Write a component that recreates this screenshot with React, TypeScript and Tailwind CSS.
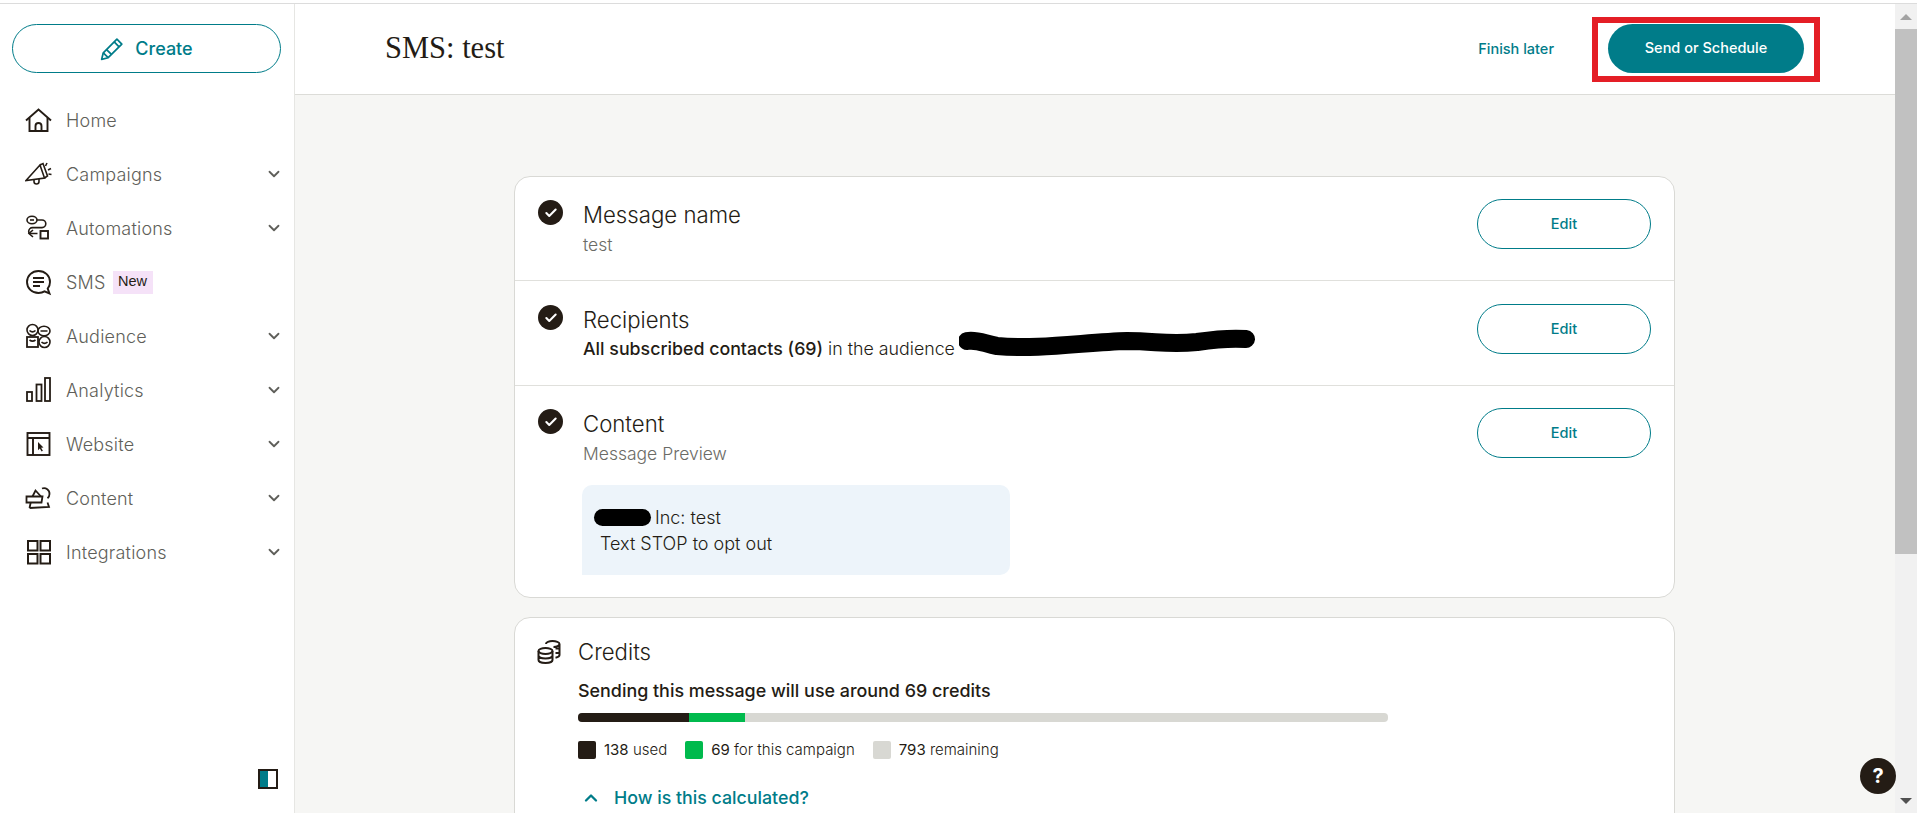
import React from "react";
import { ChevronDown, ChevronUp, Check } from "lucide-react";

const stroke = { fill: "none", stroke: "#241c15", strokeWidth: 1.6 };

const icons: Record<string, React.ReactNode> = {
  Home: (
    <g {...stroke}>
      <path d="M1 13.5 13.5 2.5 26 13.5" strokeWidth="1.9" />
      <path d="M4.5 11V24h18V11" strokeWidth="1.9" />
      <path d="M10.5 24v-5a3 3 0 0 1 6 0v5" strokeWidth="1.9" />
    </g>
  ),
  Campaigns: (
    <g {...stroke}>
      <path d="M1 19.5 15 4l4.5 13L1 19.5Z" />
      <path d="M15 4l3-1.5 4.5 12.5-3 2" />
      <path d="M9 18.5v2a2.5 2.5 0 0 0 5 0v-2.5" />
      <path d="M20.5 5l1.5-3M23 9l3-1.5M23.5 13l3 .5" />
    </g>
  ),
  Automations: (
    <g {...stroke}>
      <ellipse cx="7" cy="5" rx="5" ry="3.8" />
      <path d="M5 5h4" />
      <path d="M12 5h5a3.8 3.8 0 0 1 0 7.6H7.5A3.8 3.8 0 0 0 3.7 16.4c0 1 .3 1.6.8 2.1h8" />
      <path d="M8 15l-4 3.5L8 22" />
      <rect x="15.5" y="16" width="7.5" height="7.5" strokeWidth="1.9" />
    </g>
  ),
  SMS: (
    <g {...stroke}>
      <path d="M13.5 2C7 2 2 6.8 2 13s5 11 11.5 11c2.3 0 4.3-.5 6-1.6l5 2.1-1.8-4.8C24.3 17.8 25 15.5 25 13 25 6.8 20 2 13.5 2Z" strokeWidth="1.9" />
      <path d="M8 9h11M8 13h11M8 17h7" strokeWidth="1.9" />
    </g>
  ),
  Audience: (
    <g {...stroke}>
      <circle cx="7.5" cy="7" r="5.5" />
      <ellipse cx="19" cy="8" rx="6" ry="4.8" />
      <rect x="2" y="14" width="11" height="10" strokeWidth="1.8" />
      <circle cx="19.5" cy="19" r="5.5" />
      <path d="M4.5 7.5c2 1.8 4 1.8 6 0M15.5 8h7M4.5 17c2 1.5 4 1.5 6 0M16.5 19c2 1.8 4 1.8 6 0" />
    </g>
  ),
  Analytics: (
    <g {...stroke} strokeWidth="1.8">
      <rect x="2" y="15" width="5" height="9" />
      <rect x="11.5" y="7.5" width="5" height="16.5" />
      <rect x="20" y="1" width="5" height="23" />
    </g>
  ),
  Website: (
    <g {...stroke} strokeWidth="1.9">
      <rect x="2.5" y="2" width="22" height="22" />
      <path d="M2.5 7h22M8 7v17" />
      <path d="M13 11l5.5 5.5-2.4.3 1.8 3-1.3.7-1.8-3-1.8 1.7Z" fill="#241c15" stroke="none" />
    </g>
  ),
  Content: (
    <g {...stroke} strokeWidth="1.8">
      <path d="M1.5 11.5h16l-1 6H1.5v-6Z" />
      <path d="M7.5 11.5l3-6 5.5 6" />
      <path d="M4.5 23l1.2-5.5M4.5 23l19.5-1-1.5-4.5" />
      <path d="M17 3.5a5.5 5.5 0 0 1 7.5 5.5c0 1.8-.8 3.3-2 4.3" />
    </g>
  ),
  Integrations: (
    <g {...stroke} strokeWidth="2">
      <rect x="3" y="2" width="9.5" height="9.5" />
      <rect x="15.5" y="2" width="9.5" height="9.5" />
      <rect x="3" y="15" width="9.5" height="9.5" />
      <rect x="15.5" y="15" width="9.5" height="9.5" />
    </g>
  ),
};

const nav = [
  { label: "Home" },
  { label: "Campaigns", chevron: true },
  { label: "Automations", chevron: true },
  { label: "SMS", badge: true },
  { label: "Audience", chevron: true },
  { label: "Analytics", chevron: true },
  { label: "Website", chevron: true },
  { label: "Content", chevron: true },
  { label: "Integrations", chevron: true },
];

function NavRow({ label, chevron, badge }: { label: string; chevron?: boolean; badge?: boolean }) {
  return (
    <div className="flex h-[54px] items-center pl-[25px] pr-[11px]">
      <svg width="27" height="27" viewBox="0 0 27 27" className="shrink-0">
        {icons[label]}
      </svg>
      <span className="ml-[14px] text-[18px] font-light tracking-[0.2px] text-[#5f5f5a]">{label}</span>
      {badge && (
        <span
          className="ml-[7px] flex h-[23px] w-[40px] items-center justify-center bg-[#f5e2f8] text-[14.5px] text-[#241c15]"
          style={{ fontFamily: "'Liberation Sans', sans-serif" }}
        >
          New
        </span>
      )}
      {chevron && <ChevronDown className="ml-auto text-[#5f5f5a]" size={18} strokeWidth={2.4} />}
    </div>
  );
}

function Section({
  title,
  pad,
  last,
  children,
}: {
  title: string;
  pad: string;
  last?: boolean;
  children: React.ReactNode;
}) {
  return (
    <section className={`flex pl-[23px] pr-[23px] ${pad} ${last ? "h-[211px]" : "border-b border-[#e0e0dc]"}`}>
      <span className="mt-[1px] flex h-[25px] w-[25px] shrink-0 items-center justify-center rounded-full bg-[#241c15]">
        <Check size={14} strokeWidth={3.5} className="text-white" />
      </span>
      <div className="ml-[20px] min-w-0 flex-1">
        <h2 className="mt-[1px] text-[22.2px] leading-[30px] font-light text-[#241c15]">{title}</h2>
        {children}
      </div>
      <button className="h-[50px] w-[174px] shrink-0 rounded-full border border-[#007c89] bg-white text-[14.5px] font-medium text-[#007c89]">
        Edit
      </button>
    </section>
  );
}

function Legend({ color, num, text }: { color: string; num: string; text: string }) {
  return (
    <div className="flex items-center">
      <span className={`h-[18px] w-[18px] rounded-[2px] ${color}`} />
      <span className="ml-[8px] text-[15px] leading-[18px] font-light text-[#241c15]">
        <span className="font-normal">{num}</span> {text}
      </span>
    </div>
  );
}

export default function App() {
  return (
    <div
      className="relative flex h-[813px] w-[1917px] flex-col overflow-hidden bg-white"
      style={{ fontFamily: "Inter, 'Liberation Sans', sans-serif" }}
    >
      <div className="h-[4px] shrink-0 border-b border-[#dcdcdc] bg-white" />
      <div className="flex min-h-0 flex-1">
        <aside className="flex w-[295px] shrink-0 flex-col border-r border-[#e6e6e3] bg-white">
          <div className="pt-[20px] pr-[13px] pb-[20px] pl-[12px]">
            <button className="flex h-[49px] w-full items-center justify-center gap-[11px] rounded-full border border-[#007c89] text-[18px] font-medium text-[#007c89]">
              <svg width="24" height="24" viewBox="0 0 22 22" fill="none" stroke="#007c89" strokeWidth="1.6">
                <path d="M1.5 20.5l1.5-6L15.5 2l4.5 4.5L7.5 19l-6 1.5Z" strokeLinejoin="round" />
                <path d="M3 14.5l4.5 4.5M6 11.5l4.5 4.5M13 4.5l4.5 4.5" />
              </svg>
              Create
            </button>
          </div>
          <nav className="flex flex-col">
            {nav.map((n) => (
              <NavRow key={n.label} {...n} />
            ))}
          </nav>
          <div className="mt-auto flex justify-end pr-[16px] pb-[24px]">
            <div className="flex h-[20px] w-[20px] border-2 border-[#241c15]">
              <div className="w-1/2 bg-[#007c89]" />
              <div className="w-1/2 bg-white" />
            </div>
          </div>
        </aside>

        <main className="flex min-w-0 flex-1 flex-col overflow-hidden bg-[#f6f6f4]">
          <header className="flex h-[91px] shrink-0 items-center border-b border-[#dcdcd8] bg-white pr-[75px] pl-[90px]">
            <h1 className="text-[30.5px] text-[#241c15]" style={{ fontFamily: "'Liberation Serif', serif" }}>
              SMS: test
            </h1>
            <a className="ml-auto text-[14.5px] font-medium text-[#007c89]">Finish later</a>
            <div className="ml-[38px] border-[6px] border-[#e41e26] px-[10px] pt-[1px] pb-[3px]">
              <button className="h-[49px] w-[196px] rounded-full bg-[#007c89] text-[14.5px] font-medium text-white">
                Send or Schedule
              </button>
            </div>
          </header>

          <div className="ml-[219px] w-[1161px] pt-[81px]">
            <div className="rounded-[16px] border border-[#d9d9d5] bg-white">
              <Section title="Message name" pad="pt-[22px] h-[104px]">
                <p className="mt-[3px] text-[17.5px] leading-[24px] font-light text-[#6b6b66]">test</p>
              </Section>
              <Section title="Recipients" pad="pt-[23px] h-[105px]">
                <div className="relative mt-[2px] whitespace-nowrap text-[17.8px] leading-[24px] font-light text-[#241c15]">
                  <span className="font-medium">All subscribed contacts (69)</span> in the audience
                  <svg className="absolute top-[-10px] left-[376px]" width="305" height="40" viewBox="0 0 305 40">
                    <path
                      d="M8 14c10-2 18 3 30 5 40 4 90-4 130-5 30 0 40 4 70 1 20-3 36-4 49-3"
                      fill="none"
                      stroke="#000"
                      strokeWidth="18"
                      strokeLinecap="round"
                    />
                  </svg>
                </div>
              </Section>
              <Section title="Content" pad="pt-[22px]" last>
                <p className="mt-[3px] text-[17.5px] leading-[24px] font-light text-[#6b6b66]">Message Preview</p>
                <div className="mt-[19px] ml-[-1px] h-[90px] w-[428px] rounded-[10px] rounded-bl-none bg-[#edf4fa] pt-[19px] text-[18px] font-light text-[#241c15]">
                  <div className="flex h-[26px] items-center pl-[12px]">
                    <span className="h-[17px] w-[57px] rounded-full bg-black" />
                    <span className="ml-[4px]">Inc: test</span>
                  </div>
                  <div className="flex h-[27px] items-center pl-[18px]">Text STOP to opt out</div>
                </div>
              </Section>
            </div>

            <div className="mt-[19px] rounded-[16px] border border-[#d9d9d5] bg-white pt-[19px] pb-[60px] pl-[22px]">
              <div className="flex items-center">
                <svg width="24" height="24" viewBox="0 0 24 24" fill="none" stroke="#241c15" strokeWidth="2">
                  <ellipse cx="8.5" cy="11" rx="7" ry="3" />
                  <path d="M1.5 11v9c0 1.7 3.1 3 7 3s7-1.3 7-3v-9M1.5 15.5c0 1.7 3.1 3 7 3s7-1.3 7-3" />
                  <path d="M9 4c0-1.7 3-3 6.5-3s7 1.3 7 3-3 3-6 3M22.5 4v11c0 1.2-1.5 2.2-4 2.7M18.5 8.5h4M18.5 13h4" />
                </svg>
                <h2 className="ml-[17px] text-[22.2px] leading-[30px] font-light text-[#241c15]">Credits</h2>
              </div>
              <div className="pl-[41px]">
                <p className="mt-[12px] text-[17.9px] leading-[24px] font-medium text-[#241c15]">
                  Sending this message will use around 69 credits
                </p>
                <div className="mt-[10px] flex h-[9px] w-[810px] overflow-hidden rounded-[4px] bg-[#d8d8d3]">
                  <div className="w-[111px] bg-[#241c15]" />
                  <div className="w-[56px] bg-[#00ba4d]" />
                </div>
                <div className="mt-[19px] flex gap-[18px]">
                  <Legend color="bg-[#241c15]" num="138" text="used" />
                  <Legend color="bg-[#00ba4d]" num="69" text="for this campaign" />
                  <Legend color="bg-[#d8d8d3]" num="793" text="remaining" />
                </div>
                <div className="mt-[27px] flex h-[24px] items-center text-[#007c89]">
                  <ChevronUp size={20} strokeWidth={2.8} className="ml-[3px]" />
                  <span className="ml-[13px] text-[17.8px] font-medium">How is this calculated?</span>
                </div>
              </div>
            </div>
          </div>
        </main>

        <div className="flex w-[22px] shrink-0 flex-col items-center bg-[#f1f1f1]">
          <div className="flex h-[25px] w-full items-center justify-center">
            <span className="h-0 w-0 border-x-[6px] border-b-[6px] border-x-transparent border-b-[#a3a3a3]" />
          </div>
          <div className="h-[525px] w-full bg-[#c1c1c1]" />
          <div className="mt-auto flex h-[25px] w-full items-center justify-center">
            <span className="h-0 w-0 border-x-[6px] border-t-[6px] border-x-transparent border-t-[#505050]" />
          </div>
        </div>
      </div>

      <button className="absolute top-[758px] left-[1860px] flex h-[36px] w-[36px] items-center justify-center rounded-full bg-[#241c15] text-[20px] font-bold text-white">
        ?
      </button>
    </div>
  );
}
